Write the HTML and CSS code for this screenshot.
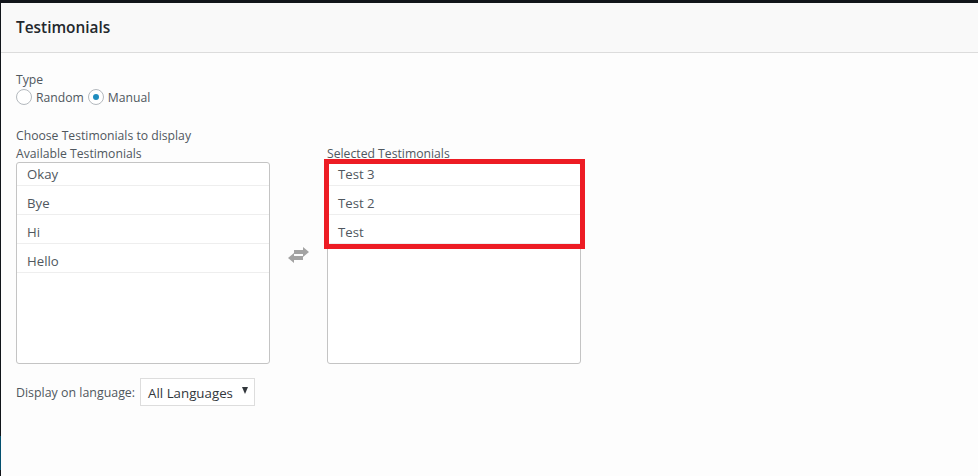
FILE: index.html
```html
<!DOCTYPE html>
<html lang="en">

<head>
    <meta charset="utf-8">
    <title>Testimonials</title>
    <link rel="stylesheet" href="styles.css">
</head>

<body>
    <div class="panel">
        <header class="panel-header">
            <h1>Testimonials</h1>
        </header>

        <main class="panel-body">
            <div class="type-field">
                <div class="field-label">Type</div>
                <div class="radio-row">
                    <span class="radio"></span><span class="radio-text">Random</span>
                    <span class="radio checked"></span><span class="radio-text">Manual</span>
                </div>
            </div>

            <div class="field-label choose-label">Choose Testimonials to display</div>

            <div class="lists">
                <section class="list-col">
                    <div class="field-label">Available Testimonials</div>
                    <ul class="list-box">
                        <li>Okay</li>
                        <li>Bye</li>
                        <li>Hi</li>
                        <li>Hello</li>
                    </ul>
                </section>

                <div class="swap">
                    <svg width="21" height="16" viewBox="0 0 21 16">
                        <path d="M6 3h9V0l6 5-6 5V7H6z" fill="#a3a3a3"/>
                        <path d="M15 9H6V6l-6 5 6 5v-3h9z" fill="#a3a3a3"/>
                    </svg>
                </div>

                <section class="list-col">
                    <div class="field-label">Selected Testimonials</div>
                    <ul class="list-box">
                        <li>Test 3</li>
                        <li>Test 2</li>
                        <li>Test</li>
                    </ul>
                    <div class="highlight"></div>
                </section>
            </div>

            <div class="language-row">
                <span class="field-label language-label">Display on language:</span>
                <div class="select-box">All Languages<span class="caret"></span></div>
            </div>
        </main>
    </div>
</body>

</html>
```

FILE: styles.css
```css
* {
    box-sizing: border-box;
}

html,
body {
    height: 100%;
}

body {
    margin: 0;
    background: #fdfdfd;
    color: #50575e;
    font-family: "Open Sans", sans-serif;
    font-size: 12.2px;
    overflow: hidden;
}

.panel {
    position: relative;
    height: 476px;
    border-top: 3px solid #11151a;
    border-left: 1px solid #11151a;
}

/* Teal bit of the window behind, on the left edge */
.panel::after {
    content: "";
    position: absolute;
    left: -1px;
    top: 433px;
    width: 1px;
    height: 34px;
    background: #03506f;
}

/* Header */
.panel-header {
    height: 50px;
    padding: 0 15px;
    display: flex;
    align-items: center;
    background: #f9f9f9;
    border-bottom: 1px solid #dcdcdc;
}

.panel-header h1 {
    margin: 0 0 1px;
    font-size: 15.4px;
    font-weight: 600;
    color: #23282d;
}

.panel-body {
    padding: 18px 15px 0;
}

.field-label {
    line-height: 18px;
    height: 17px;
}

/* Radio buttons */
.radio-row {
    display: flex;
    align-items: center;
    height: 18px;
}

.radio {
    width: 16px;
    height: 16px;
    border: 1px solid #b4b9be;
    border-radius: 50%;
    background: #fff;
    display: flex;
    align-items: center;
    justify-content: center;
}

.radio.checked::before {
    content: "";
    width: 6px;
    height: 6px;
    border-radius: 50%;
    background: #1e8cbe;
}

.radio-text {
    margin: 0 4px;
}

.choose-label {
    margin-top: 21px;
    height: 18px;
}

/* Two lists */
.lists {
    display: flex;
}

.list-col {
    position: relative;
    width: 254px;
}

.list-box {
    list-style: none;
    margin: 0;
    padding: 0;
    height: 202px;
    background: #fff;
    border: 1px solid #c4c4c4;
    border-radius: 3px;
}

.list-box li {
    height: 29px;
    padding: 7px 0 0 10px;
    line-height: 21px;
    font-size: 13.2px;
    border-bottom: 1px solid #eee;
}

.list-box li:first-child {
    height: 23px;
    padding-top: 0;
    line-height: 23px;
}

.swap {
    width: 57px;
    padding: 102px 0 0 18px;
}

.highlight {
    position: absolute;
    top: 14px;
    left: -3px;
    width: 261px;
    height: 90px;
    border: 5px solid #ed1c24;
}

/* Language select */
.language-row {
    display: flex;
    align-items: center;
    margin-top: 14px;
}

.language-label {
    font-size: 12.4px;
    margin-top: 1px;
}

.select-box {
    display: flex;
    align-items: center;
    width: 115px;
    height: 28px;
    margin-left: 5px;
    padding: 1px 0 0 7px;
    font-size: 13.3px;
    color: #32373c;
    background: #fff;
    border: 1px solid #ddd;
}

.caret {
    margin: -4px 0 0 9px;
    border-left: 3.5px solid transparent;
    border-right: 3.5px solid transparent;
    border-top: 7px solid #32373c;
}
```
